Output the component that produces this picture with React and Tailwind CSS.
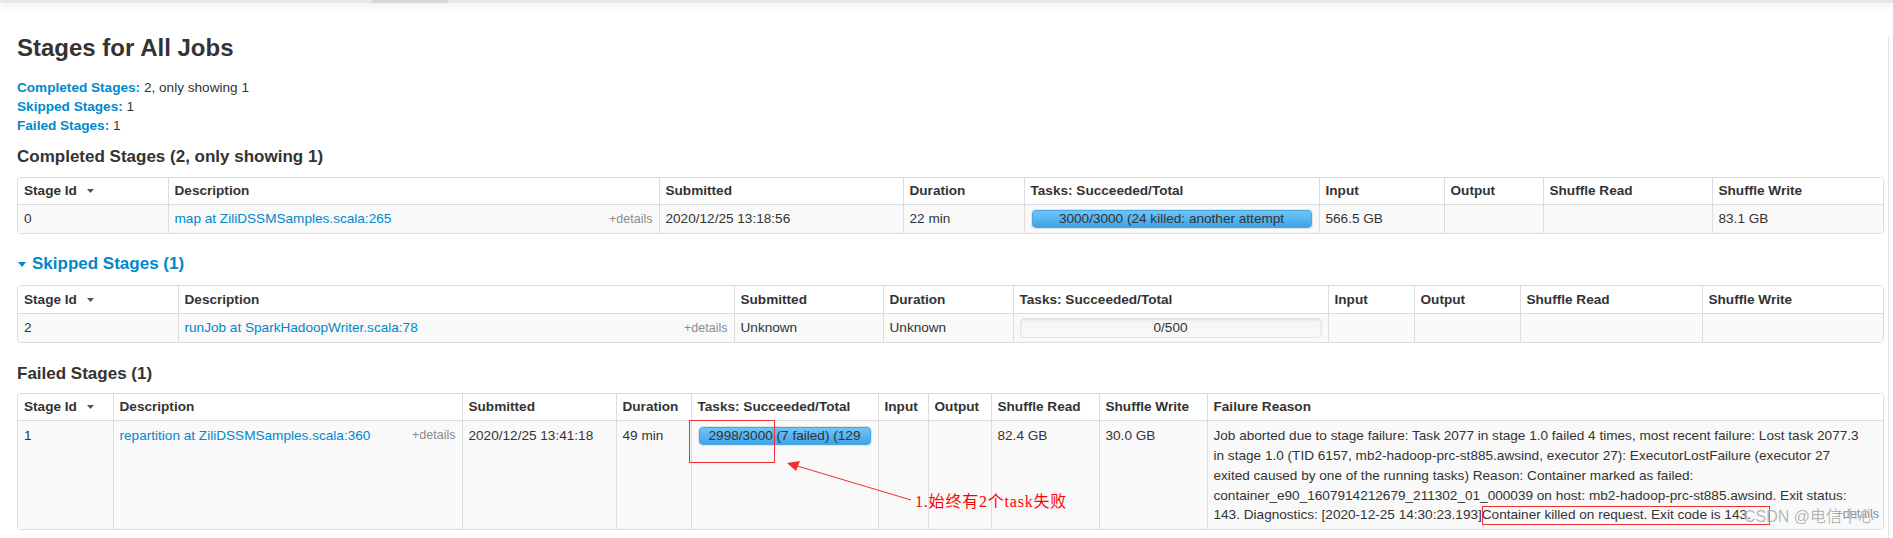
import React from "react";

const LINK = "text-[#0088cc]";

const SortCaret = () => (
  <svg width="7" height="4" viewBox="0 0 7 4" className="inline-block ml-[10px] align-middle">
    <path d="M0 0h7L3.5 4z" fill="#555555" />
  </svg>
);

const Progress = ({ text, done }) => (
  <div className="relative h-[20px] rounded-[4px] overflow-hidden border border-[#e3e3e3] bg-gradient-to-b from-[#f5f5f5] to-[#f9f9f9] shadow-[inset_0_1px_2px_rgba(0,0,0,0.1)]">
    {done && (
      <div className="absolute inset-y-0 left-0 w-full rounded-[4px] border border-[#47a6e6] bg-gradient-to-b from-[#6ec6f7] to-[#3ea3e9]" />
    )}
    <div className="absolute inset-0 text-center leading-[18px] text-[#333333] whitespace-nowrap overflow-hidden">{text}</div>
  </div>
);

const Desc = ({ label }) => (
  <div className="flex justify-between">
    <a className={`${LINK} whitespace-nowrap`}>{label}</a>
    <span className="text-[12.5px] text-[#8c8c8c] whitespace-nowrap">+details</span>
  </div>
);

const StageTable = ({ cols, headers, cells, tall }) => (
  <div className="border border-[#dddddd] rounded-[4px] overflow-hidden">
    <table className="w-full table-fixed border-collapse">
      <colgroup>
        {cols.map((c, i) => (
          <col key={i} className={c} />
        ))}
      </colgroup>
      <thead>
        <tr className="bg-white">
          {headers.map((h, i) => (
            <th
              key={i}
              className={`h-[27px] px-[6px] py-0 text-left font-bold text-[#333333] whitespace-nowrap ${i ? "border-l border-[#dddddd]" : ""}`}
            >
              {h}
              {i === 0 && <SortCaret />}
            </th>
          ))}
        </tr>
      </thead>
      <tbody>
        <tr className="bg-[#f9f9f9]">
          {cells.map((c, i) => (
            <td
              key={i}
              className={`align-top px-[6px] border-t border-[#dddddd] ${i ? "border-l" : ""} ${tall ? "pt-[5px] pb-[4px] leading-[19.7px]" : "h-[28px] py-[4px] leading-[20px]"}`}
            >
              {c}
            </td>
          ))}
        </tr>
      </tbody>
    </table>
  </div>
);

const Heading = ({ children, className = "" }) => (
  <h4 className={`text-[17px] leading-[20px] font-bold ${className}`}>{children}</h4>
);

const failure = [
  "Job aborted due to stage failure: Task 2077 in stage 1.0 failed 4 times, most recent failure: Lost task 2077.3",
  "in stage 1.0 (TID 6157, mb2-hadoop-prc-st885.awsind, executor 27): ExecutorLostFailure (executor 27",
  "exited caused by one of the running tasks) Reason: Container marked as failed:",
  "container_e90_1607914212679_211302_01_000039 on host: mb2-hadoop-prc-st885.awsind. Exit status:",
];

export default function App() {
  return (
    <div className="relative w-[1893px] h-[538px] overflow-hidden bg-white text-[#333333] text-[13.6px] font-['Liberation_Sans',Arial,sans-serif]">
      <div className="h-[3px] bg-[#e7e7e7] shadow-[0_2px_7px_rgba(0,0,0,0.13)] flex">
        <div className="ml-[372px] w-[76px] bg-[#d6d6d6]" />
      </div>

      <div className="w-[1889px] h-[535px] border-r border-[#e6e6e6] px-[17px] pr-[4px]">
        <h3 className="mt-[33px] text-[24px] leading-[24px] font-bold text-[#333333]">Stages for All Jobs</h3>

        <ul className="mt-[17.5px] leading-[19.3px]">
          <li>
            <a className={`${LINK} font-bold`}>Completed Stages:</a> 2, only showing 1
          </li>
          <li>
            <a className={`${LINK} font-bold`}>Skipped Stages:</a> 1
          </li>
          <li>
            <a className={`${LINK} font-bold`}>Failed Stages:</a> 1
          </li>
        </ul>

        <Heading className="mt-[11.6px]">Completed Stages (2, only showing 1)</Heading>
        <div className="mt-[10px]">
          <StageTable
            cols={["w-[150px]", "w-[491px]", "w-[244px]", "w-[121px]", "w-[295px]", "w-[125px]", "w-[99px]", "w-[169px]", "w-[173px]"]}
            headers={["Stage Id", "Description", "Submitted", "Duration", "Tasks: Succeeded/Total", "Input", "Output", "Shuffle Read", "Shuffle Write"]}
            cells={[
              "0",
              <Desc label="map at ZiliDSSMSamples.scala:265" />,
              "2020/12/25 13:18:56",
              "22 min",
              <Progress done text="3000/3000 (24 killed: another attempt" />,
              "566.5 GB",
              "",
              "",
              "83.1 GB",
            ]}
          />
        </div>

        <Heading className={`mt-[20px] ${LINK} flex items-center`}>
          <svg width="8" height="5" viewBox="0 0 8 5" className="ml-[1px] mr-[6px]">
            <path d="M0 0h8L4 5z" fill="#0088cc" />
          </svg>
          Skipped Stages (1)
        </Heading>
        <div className="mt-[11px]">
          <StageTable
            cols={["w-[160px]", "w-[556px]", "w-[149px]", "w-[130px]", "w-[315px]", "w-[86px]", "w-[106px]", "w-[182px]", "w-[183px]"]}
            headers={["Stage Id", "Description", "Submitted", "Duration", "Tasks: Succeeded/Total", "Input", "Output", "Shuffle Read", "Shuffle Write"]}
            cells={[
              "2",
              <Desc label="runJob at SparkHadoopWriter.scala:78" />,
              "Unknown",
              "Unknown",
              <Progress text="0/500" />,
              "",
              "",
              "",
              "",
            ]}
          />
        </div>

        <Heading className="mt-[21px]">Failed Stages (1)</Heading>
        <div className="mt-[9px]">
          <StageTable
            tall
            cols={["w-[95px]", "w-[349px]", "w-[154px]", "w-[75px]", "w-[187px]", "w-[50px]", "w-[63px]", "w-[108px]", "w-[108px]", "w-[678px]"]}
            headers={["Stage Id", "Description", "Submitted", "Duration", "Tasks: Succeeded/Total", "Input", "Output", "Shuffle Read", "Shuffle Write", "Failure Reason"]}
            cells={[
              "1",
              <Desc label="repartition at ZiliDSSMSamples.scala:360" />,
              "2020/12/25 13:41:18",
              "49 min",
              <Progress done text="2998/3000 (7 failed) (129" />,
              "",
              "",
              "82.4 GB",
              "30.0 GB",
              <div>
                {failure.map((l, i) => (
                  <div key={i} className="whitespace-nowrap">{l}</div>
                ))}
                <div className="flex justify-between whitespace-nowrap">
                  <span>143. Diagnostics: [2020-12-25 14:30:23.193]Container killed on request. Exit code is 143.</span>
                  <span className="text-[12.5px] text-[#8c8c8c]">+details</span>
                </div>
              </div>,
            ]}
          />
        </div>
      </div>

      {/* annotations drawn over the screenshot */}
      <div className="absolute left-[689px] top-[420px] w-[86px] h-[43px] border border-[#f03030]" />
      <div className="absolute left-[1482px] top-[506px] w-[288px] h-[19px] border border-[#f03030]" />
      <svg className="absolute left-[780px] top-[455px]" width="140" height="55" viewBox="0 0 140 55">
        <line x1="131" y1="45" x2="14" y2="10" stroke="#f03030" strokeWidth="1" />
        <path d="M7 8 L20 6 L16 16 Z" fill="#f03030" />
      </svg>
      <div className="absolute left-[915px] top-[492px] text-[16px] leading-[20px] tracking-[0.8px] text-[#ff0000] font-['Liberation_Serif','Noto_Sans_CJK_SC',serif] whitespace-nowrap">
        1.始终有2个task失败
      </div>
      <div className="absolute left-[1744px] top-[506px] text-[16px] leading-[22px] text-[rgba(120,120,120,0.55)] font-['Liberation_Sans','Noto_Sans_CJK_SC',sans-serif] whitespace-nowrap [text-shadow:0_0_2px_rgba(255,255,255,0.9)]">
        CSDN @电信中心
      </div>
    </div>
  );
}
